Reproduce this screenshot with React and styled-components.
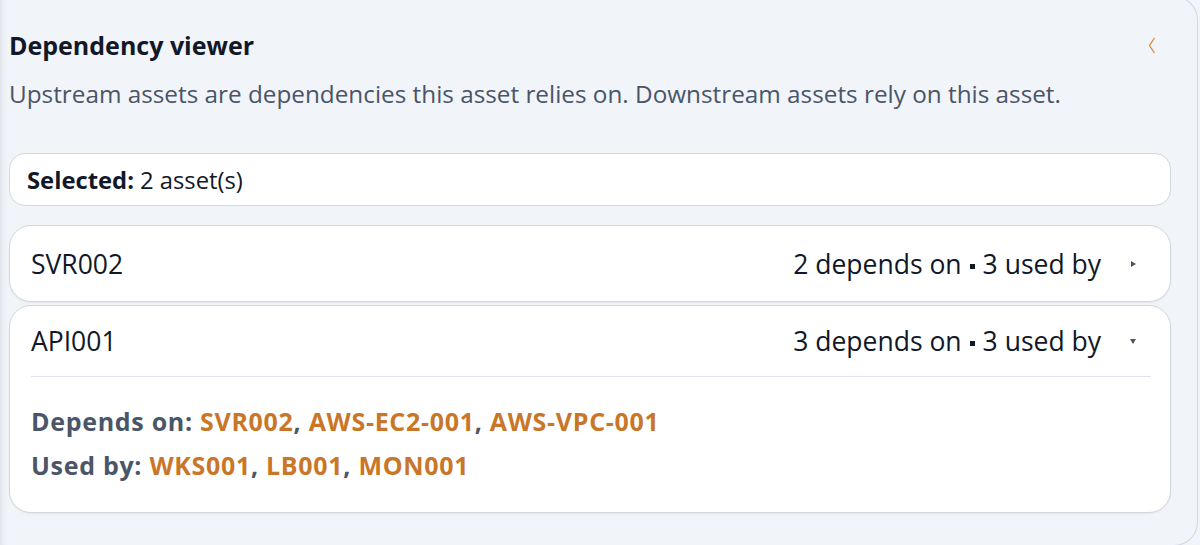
import React, { useState } from "react";
import styled, { createGlobalStyle } from "styled-components";

// Design tokens
const PANEL_BG = "#f1f4f9";
const CARD_BG = "#ffffff";
const BORDER = "#d3d7de";
const DIVIDER = "#dfe3ea";
const TEXT_DARK = "#111827";
const TEXT_MUTED = "#4a5568";
const ACCENT = "#c97628";
const FONT = "'Open Sans', 'Noto Sans', sans-serif";

const GlobalStyle = createGlobalStyle`
  html, body {
    margin: 0;
    padding: 0;
    background: ${PANEL_BG};
    overflow: hidden;
  }
  * { box-sizing: border-box; }
`;

/* Outer panel */
const Panel = styled.section`
  width: 1198px;
  height: 550px;
  margin-top: -4px;
  padding: 33px 26px 0 9px;
  background: ${PANEL_BG};
  border: 1px solid ${BORDER};
  border-left: none;
  border-radius: 0 24px 24px 0;
  box-shadow: inset 8px 0 8px -8px rgba(15, 23, 42, 0.12);
  font-family: ${FONT};
  color: ${TEXT_DARK};
`;

const Header = styled.header`
  display: flex;
  align-items: center;
  justify-content: space-between;
  height: 30px;
`;

const Title = styled.h2`
  margin: 0;
  font-size: 25px;
  line-height: 30px;
  font-weight: 700;
  color: ${TEXT_DARK};
`;

const Collapse = styled.button`
  display: flex;
  align-items: center;
  justify-content: center;
  width: 20px;
  height: 20px;
  margin-right: 9px;
  padding: 0;
  border: none;
  background: transparent;
  cursor: pointer;
`;

const Subtitle = styled.p`
  margin: 19px 0 0;
  font-size: 24.3px;
  line-height: 30px;
  color: ${TEXT_MUTED};
`;

const Stack = styled.div`
  display: flex;
  flex-direction: column;
  margin-top: 44px;
`;

const SelectedBox = styled.div`
  display: flex;
  align-items: center;
  height: 53px;
  padding: 0 17px;
  background: ${CARD_BG};
  border: 1px solid ${BORDER};
  border-radius: 16px;
  font-size: 23.8px;
  margin-bottom: 19px;

  strong { font-weight: 700; margin-right: 6px; }
`;

const Card = styled.div`
  background: ${CARD_BG};
  border: 1px solid ${BORDER};
  border-radius: 22px;
  box-shadow: 0 1px 2px rgba(15, 23, 42, 0.06);
  margin-bottom: 3px;
  padding: 0 19px 0 21px;
`;

const Row = styled.div`
  display: flex;
  align-items: center;
  justify-content: space-between;
  height: ${(p) => (p.$open ? 71 : 75)}px;
  border-bottom: ${(p) => (p.$open ? `1px solid ${DIVIDER}` : "none")};
  font-size: 26.5px;
  color: ${TEXT_DARK};
`;

const Meta = styled.div`
  display: flex;
  align-items: center;
  gap: 14px;
`;

const Dot = styled.span`
  display: inline-block;
  width: 5px;
  height: 5px;
  margin: 0 8px;
  vertical-align: middle;
  background: currentColor;
`;

const Caret = styled.span`
  display: flex;
  justify-content: center;
  width: 36px;
  color: #4b5563;
`;

const Details = styled.div`
  padding: 22px 0 25px;
`;

const Line = styled.div`
  font-size: 25px;
  line-height: 44px;
  font-weight: 700;
  letter-spacing: 0.7px;
  color: ${TEXT_MUTED};

  span { color: ${ACCENT}; }
`;

const assets = [
  { id: "SVR002", dependsOn: ["AWS-EC2-001", "AWS-VPC-001"], usedBy: ["API001", "WKS001", "LB001"] },
  { id: "API001", dependsOn: ["SVR002", "AWS-EC2-001", "AWS-VPC-001"], usedBy: ["WKS001", "LB001", "MON001"] },
];

const Links = ({ items }) =>
  items.map((x, i) => (
    <React.Fragment key={x}>
      {i > 0 && ", "}
      <span>{x}</span>
    </React.Fragment>
  ));

const AssetCard = ({ asset, open, onToggle }) => (
  <Card>
    <Row $open={open} onClick={onToggle}>
      <div>{asset.id}</div>
      <Meta>
        <div>
          {asset.dependsOn.length} depends on<Dot />{asset.usedBy.length} used by
        </div>
        <Caret>
          {open ? (
            <svg width="6" height="5" viewBox="0 0 6 5"><path d="M0 0h6L3 5z" fill="currentColor" /></svg>
          ) : (
            <svg width="5" height="6" viewBox="0 0 5 6"><path d="M0 0l5 3-5 3z" fill="currentColor" /></svg>
          )}
        </Caret>
      </Meta>
    </Row>
    {open && (
      <Details>
        <Line>
          Depends on: <Links items={asset.dependsOn} />
        </Line>
        <Line>
          Used by: <Links items={asset.usedBy} />
        </Line>
      </Details>
    )}
  </Card>
);

export default function App() {
  const [open, setOpen] = useState("API001");
  return (
    <>
      <GlobalStyle />
      <Panel>
        <Header>
          <Title>Dependency viewer</Title>
          <Collapse aria-label="Collapse">
            <svg width="8" height="17" viewBox="0 0 8 17">
              <path d="M6.5 1L1.5 8.5l5 7.5" fill="none" stroke="#d98a38" strokeWidth="1.3" />
            </svg>
          </Collapse>
        </Header>
        <Subtitle>
          Upstream assets are dependencies this asset relies on. Downstream assets rely on this asset.
        </Subtitle>
        <Stack>
          <SelectedBox>
            <strong>Selected:</strong> 2 asset(s)
          </SelectedBox>
          {assets.map((a) => (
            <AssetCard
              key={a.id}
              asset={a}
              open={open === a.id}
              onToggle={() => setOpen(open === a.id ? null : a.id)}
            />
          ))}
        </Stack>
      </Panel>
    </>
  );
}
